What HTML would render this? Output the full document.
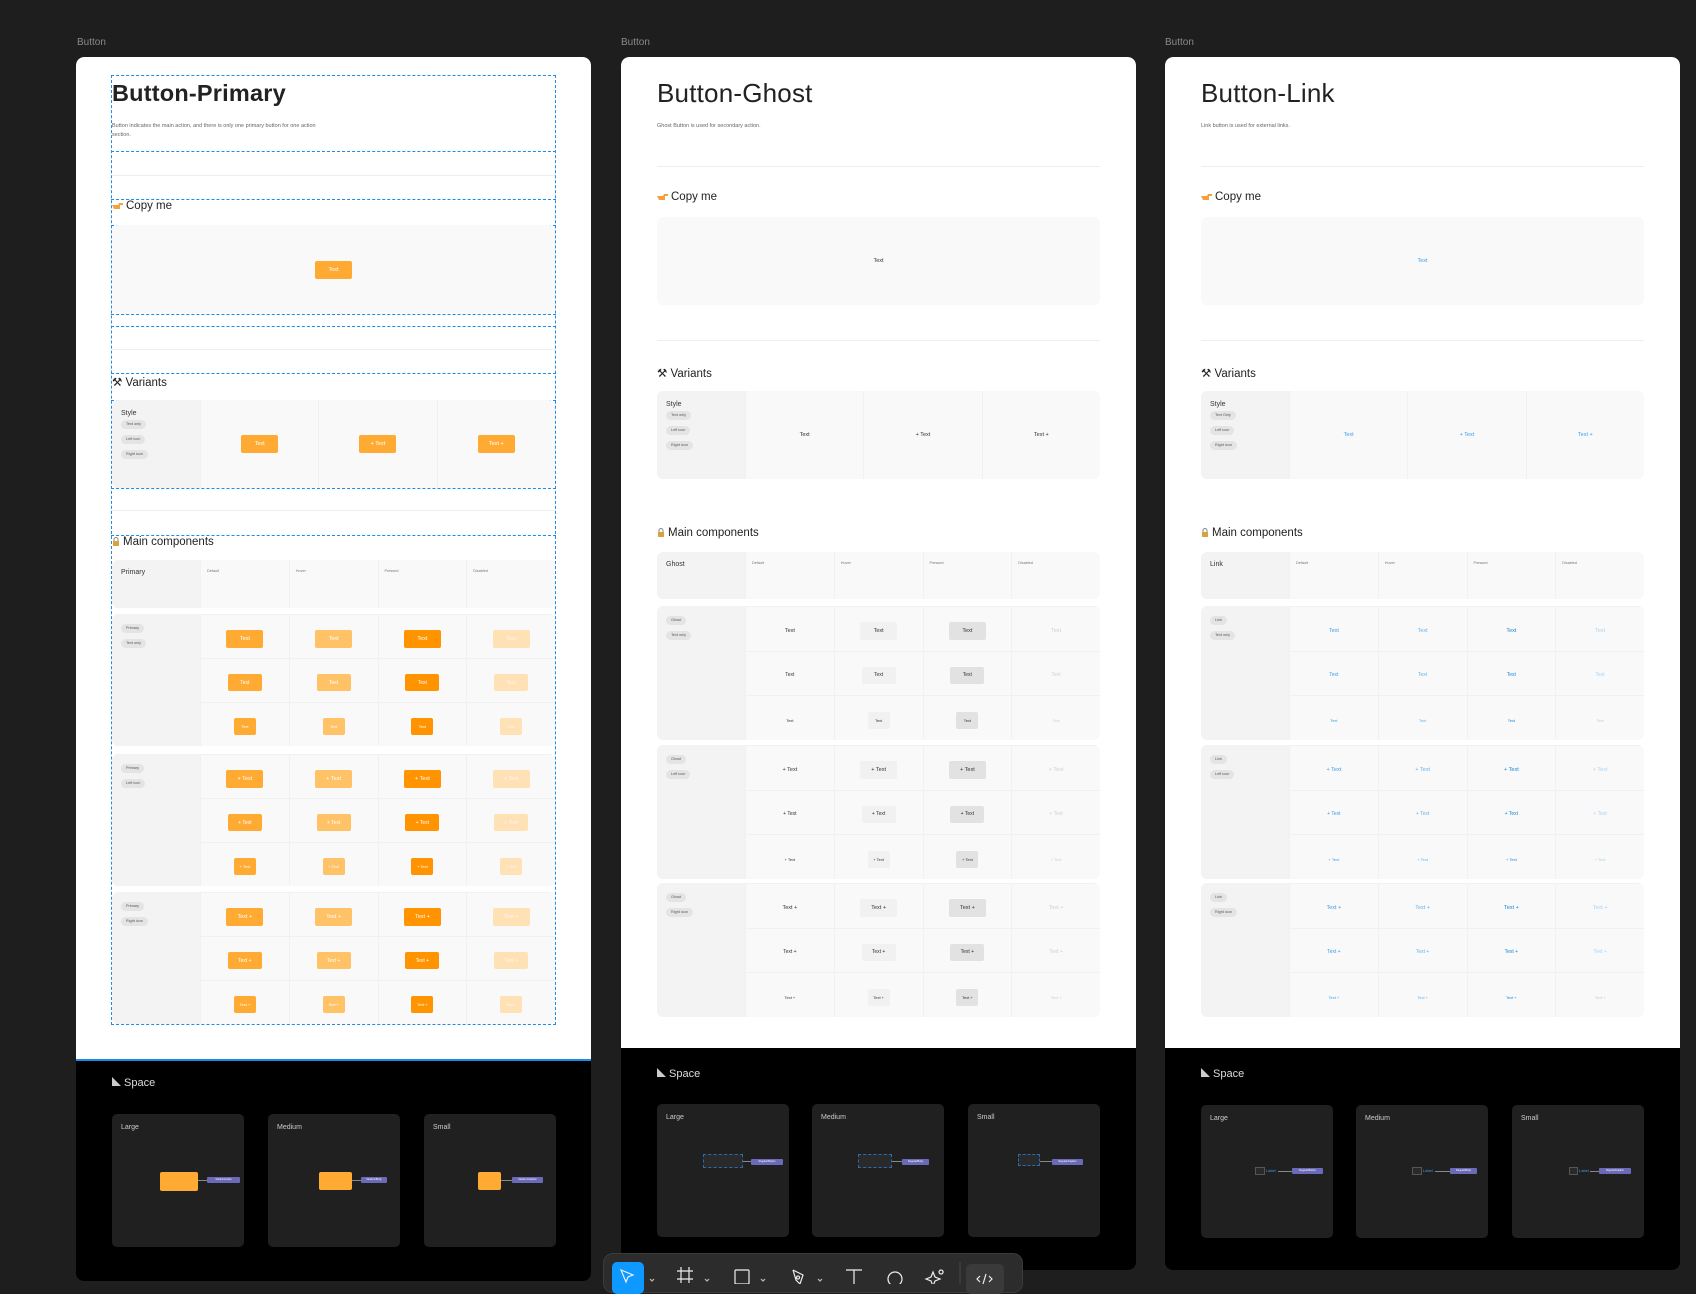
<!DOCTYPE html>
<html><head><meta charset="utf-8"><style>
*{box-sizing:border-box;margin:0;padding:0}
body{width:1696px;height:1281px;background:#1e1e1e;position:relative;overflow:hidden;font-family:"Liberation Sans",sans-serif}
.lab{position:absolute;top:37px;font-size:10px;color:#8a8a8a}
.pan{position:absolute;top:57px;width:515px;height:1213px;background:#000;border-radius:8px;overflow:hidden}
.wh{position:absolute;left:0;top:0;width:100%;background:#fff;border-radius:8px 8px 0 0}
.a{position:absolute}
.t1{font-size:26px;color:#222;left:36px;top:21px;letter-spacing:.2px}
.ds{font-size:5.5px;color:#666;left:36px;line-height:9px;width:230px}
.dv{height:1px;background:#eee;left:36px;width:443px}
.h2{font-size:11.5px;color:#222;left:36px}
.h2 svg{vertical-align:-1px;margin-right:3px}
.box{left:36px;width:443px;background:#f9f9f9;border-radius:6px}
.vb{display:grid;grid-template-columns:88px 1fr 1fr 1fr;overflow:hidden}
.vb>div{display:flex;align-items:center;justify-content:center;border-left:1px solid #f1f1f1}
.vb>div.lc{background:#f3f3f3;display:block;padding:10px 9px;border:0}
.st{font-size:7px;color:#333;margin-bottom:3px}
.tag{display:block;width:max-content;height:9px;line-height:9px;font-size:3.8px;color:#555;background:#e4e4e4;border-radius:5px;padding:0 5px;margin:0 0 6px;font-style:normal}
.g{display:grid;grid-template-columns:88px 1fr 1fr 1fr 1fr;grid-template-rows:1fr 1fr 1fr;overflow:hidden}
.g>.lc{grid-row:1/4;background:#f3f3f3;padding:10px 9px}
.g>.c{display:flex;align-items:center;justify-content:center;border-left:1px solid #f1f1f1;border-top:1px solid #f1f1f1;padding-top:4px}
.hd{display:grid;grid-template-columns:88px 1fr 1fr 1fr 1fr;overflow:hidden}
.hd>div{font-size:3.8px;color:#777;padding:9px 6px;border-left:1px solid #f1f1f1}
.hd>div.lc{background:#f3f3f3;font-size:7px;color:#333;padding:9px 9px;border:0}
.b{display:inline-flex;align-items:center;justify-content:center;border-radius:2px;font-style:normal;white-space:nowrap}
.L{width:37px;height:18px;font-size:5.5px}.M{width:34px;height:17px;font-size:5px}.S{width:22px;height:17px;font-size:4px}
.p{color:#fff;background:#ffab33}.p.h{background:#ffc266}.p.r{background:#ff9400}.p.x{background:#ffe1b6;color:#fff6ea}
.q{color:#333}.q.h{background:#f1f1f1}.q.r{background:#e2e2e2}.q.x{color:#cfcfcf}
.k{color:#3a9fea}.k.h{color:#63b4ef}.k.r{color:#1a86d8}.k.x{color:#a9d4f4}
.sp{font-size:11px;color:#ddd;left:36px}
.cd{position:absolute;width:132px;height:133px;background:#202020;border-radius:5px}
.cd span{position:absolute;left:9px;top:10px;font-size:7px;color:#ccc}
.or{position:absolute;background:#ffab33;border-radius:2px}
.gr{position:absolute;border:1px dashed #2b6cb0;background:#2a2a2a}
.pu{position:absolute;height:6px;background:#6a6ab8;border-radius:1px;font-size:2.5px;color:#fff;line-height:6px;text-align:center}
.ln{position:absolute;height:1px;background:#888}
.dl{position:absolute;border-top:1px dashed #1f8ceb;left:35px;width:445px}
.tb{position:absolute;left:603px;top:1253px;width:420px;height:40px;background:#2c2c2c;border:1px solid #3b3b3b;border-radius:10px}
</style></head><body>

<div class="lab" style="left:77px">Button</div>
<div class="lab" style="left:621px">Button</div>
<div class="lab" style="left:1165px">Button</div>

<!-- PANEL 1 -->
<div class="pan" style="left:76px;height:1224px">
 <div class="wh" style="height:1002px">
  <div class="a t1" style="font-weight:bold;left:36px;font-size:23.5px;top:23px">Button-Primary</div>
  <div class="a ds" style="top:65px;width:215px">Button indicates the main action, and there is only one primary button for one action section.</div>
  <div class="dl" style="top:18px"></div><div class="dl" style="top:94px"></div><div class="dl" style="top:142px"></div><div class="dl" style="top:168px"></div><div class="dl" style="top:257px"></div><div class="dl" style="top:269px"></div><div class="dl" style="top:316px"></div><div class="dl" style="top:343px"></div><div class="dl" style="top:431px"></div><div class="dl" style="top:478px"></div><div class="dl" style="top:967px"></div>
  <div class="a" style="left:35px;top:18px;height:950px;border-left:1px dashed #1f8ceb"></div>
  <div class="a" style="left:479px;top:18px;height:950px;border-left:1px dashed #1f8ceb"></div>
  <div class="a dv" style="top:118px"></div><div class="a dv" style="top:292px"></div><div class="a dv" style="top:453px"></div>
  <div class="a h2" style="top:143px"><svg width="11" height="8"><path d="M0 3h6l1-2h4v2h-3v4H2z" fill="#f6a23a"/></svg>Copy me</div>
  <div class="a box" style="top:168px;height:89px;display:flex;align-items:center;justify-content:center"><i class="b L p">Text</i></div>
  <div class="a h2" style="top:318px">⚒ Variants</div>
  <div class="a box vb" style="top:343px;height:88px"><div class="lc"><div class="st">Style</div><i class="tag">Text only</i><i class="tag">Left icon</i><i class="tag">Right icon</i></div><div><i class="b L p">Text</i></div><div><i class="b L p">+ Text</i></div><div><i class="b L p">Text +</i></div></div>
  <div class="a h2" style="top:479px"><svg width="8" height="9"><rect x="1" y="4" width="6" height="5" fill="#d9a23a"/><path d="M2 4V2.5a2 2 0 0 1 4 0V4" stroke="#888" fill="none"/></svg>Main components</div>
  <div class="a box hd" style="top:503px;height:48px"><div class="lc">Primary</div><div>Default</div><div>Hover</div><div>Pressed</div><div>Disabled</div></div>
  <div class="a box g" style="top:557px;height:132px"><div class="lc"><i class="tag">Primary</i><i class="tag">Text only</i></div>
   <div class="c"><i class="b L p">Text</i></div><div class="c"><i class="b L p h">Text</i></div><div class="c"><i class="b L p r">Text</i></div><div class="c"><i class="b L p x">Text</i></div>
   <div class="c"><i class="b M p">Text</i></div><div class="c"><i class="b M p h">Text</i></div><div class="c"><i class="b M p r">Text</i></div><div class="c"><i class="b M p x">Text</i></div>
   <div class="c"><i class="b S p">Text</i></div><div class="c"><i class="b S p h">Text</i></div><div class="c"><i class="b S p r">Text</i></div><div class="c"><i class="b S p x">Text</i></div></div>
  <div class="a box g" style="top:697px;height:132px"><div class="lc"><i class="tag">Primary</i><i class="tag">Left icon</i></div>
   <div class="c"><i class="b L p">+ Text</i></div><div class="c"><i class="b L p h">+ Text</i></div><div class="c"><i class="b L p r">+ Text</i></div><div class="c"><i class="b L p x">+ Text</i></div>
   <div class="c"><i class="b M p">+ Text</i></div><div class="c"><i class="b M p h">+ Text</i></div><div class="c"><i class="b M p r">+ Text</i></div><div class="c"><i class="b M p x">+ Text</i></div>
   <div class="c"><i class="b S p">+ Text</i></div><div class="c"><i class="b S p h">+ Text</i></div><div class="c"><i class="b S p r">+ Text</i></div><div class="c"><i class="b S p x">+ Text</i></div></div>
  <div class="a box g" style="top:835px;height:132px"><div class="lc"><i class="tag">Primary</i><i class="tag">Right icon</i></div>
   <div class="c"><i class="b L p">Text +</i></div><div class="c"><i class="b L p h">Text +</i></div><div class="c"><i class="b L p r">Text +</i></div><div class="c"><i class="b L p x">Text +</i></div>
   <div class="c"><i class="b M p">Text +</i></div><div class="c"><i class="b M p h">Text +</i></div><div class="c"><i class="b M p r">Text +</i></div><div class="c"><i class="b M p x">Text +</i></div>
   <div class="c"><i class="b S p">Text +</i></div><div class="c"><i class="b S p h">Text +</i></div><div class="c"><i class="b S p r">Text +</i></div><div class="c"><i class="b S p x">Text +</i></div></div>
 </div>
 <div class="a" style="left:-2px;top:-2px;width:519px;height:1006px;border:2px solid #1a8cea"></div>
 <div class="a sp" style="top:1020px"><svg width="9" height="9"><path d="M0 0v9h9z" fill="#ccc"/></svg> Space</div>
 <div class="cd" style="left:36px;top:1057px"><span>Large</span><div class="or" style="left:48px;top:58px;width:38px;height:19px"></div><div class="ln" style="left:86px;top:66px;width:9px"></div><div class="pu" style="left:95px;top:63px;width:33px">Medium/Label</div></div>
 <div class="cd" style="left:192px;top:1057px"><span>Medium</span><div class="or" style="left:51px;top:58px;width:33px;height:18px"></div><div class="ln" style="left:84px;top:66px;width:9px"></div><div class="pu" style="left:93px;top:63px;width:26px">Medium/Body</div></div>
 <div class="cd" style="left:348px;top:1057px"><span>Small</span><div class="or" style="left:54px;top:58px;width:23px;height:18px"></div><div class="ln" style="left:77px;top:66px;width:11px"></div><div class="pu" style="left:88px;top:63px;width:31px">Medium/Caption</div></div>
</div>

<!-- PANEL 2 -->
<div class="pan" style="left:621px">
 <div class="wh" style="height:991px">
  <div class="a t1">Button-Ghost</div>
  <div class="a ds" style="top:65px">Ghost Button is used for secondary action.</div>
  <div class="a dv" style="top:109px"></div><div class="a dv" style="top:283px"></div>
  <div class="a h2" style="top:134px"><svg width="11" height="8"><path d="M0 3h6l1-2h4v2h-3v4H2z" fill="#f6a23a"/></svg>Copy me</div>
  <div class="a box" style="top:160px;height:88px;display:flex;align-items:center;justify-content:center"><i class="b L q">Text</i></div>
  <div class="a h2" style="top:309px">⚒ Variants</div>
  <div class="a box vb" style="top:334px;height:88px"><div class="lc"><div class="st">Style</div><i class="tag">Text only</i><i class="tag">Left icon</i><i class="tag">Right icon</i></div><div><i class="b L q">Text</i></div><div><i class="b L q">+ Text</i></div><div><i class="b L q">Text +</i></div></div>
  <div class="a h2" style="top:470px"><svg width="8" height="9"><rect x="1" y="4" width="6" height="5" fill="#d9a23a"/><path d="M2 4V2.5a2 2 0 0 1 4 0V4" stroke="#888" fill="none"/></svg>Main components</div>
  <div class="a box hd" style="top:495px;height:47px"><div class="lc">Ghost</div><div>Default</div><div>Hover</div><div>Pressed</div><div>Disabled</div></div>
  <div class="a box g" style="top:549px;height:134px"><div class="lc"><i class="tag">Ghost</i><i class="tag">Text only</i></div>
   <div class="c"><i class="b L q">Text</i></div><div class="c"><i class="b L q h">Text</i></div><div class="c"><i class="b L q r">Text</i></div><div class="c"><i class="b L q x">Text</i></div>
   <div class="c"><i class="b M q">Text</i></div><div class="c"><i class="b M q h">Text</i></div><div class="c"><i class="b M q r">Text</i></div><div class="c"><i class="b M q x">Text</i></div>
   <div class="c"><i class="b S q">Text</i></div><div class="c"><i class="b S q h">Text</i></div><div class="c"><i class="b S q r">Text</i></div><div class="c"><i class="b S q x">Text</i></div></div>
  <div class="a box g" style="top:688px;height:134px"><div class="lc"><i class="tag">Ghost</i><i class="tag">Left icon</i></div>
   <div class="c"><i class="b L q">+ Text</i></div><div class="c"><i class="b L q h">+ Text</i></div><div class="c"><i class="b L q r">+ Text</i></div><div class="c"><i class="b L q x">+ Text</i></div>
   <div class="c"><i class="b M q">+ Text</i></div><div class="c"><i class="b M q h">+ Text</i></div><div class="c"><i class="b M q r">+ Text</i></div><div class="c"><i class="b M q x">+ Text</i></div>
   <div class="c"><i class="b S q">+ Text</i></div><div class="c"><i class="b S q h">+ Text</i></div><div class="c"><i class="b S q r">+ Text</i></div><div class="c"><i class="b S q x">+ Text</i></div></div>
  <div class="a box g" style="top:826px;height:134px"><div class="lc"><i class="tag">Ghost</i><i class="tag">Right icon</i></div>
   <div class="c"><i class="b L q">Text +</i></div><div class="c"><i class="b L q h">Text +</i></div><div class="c"><i class="b L q r">Text +</i></div><div class="c"><i class="b L q x">Text +</i></div>
   <div class="c"><i class="b M q">Text +</i></div><div class="c"><i class="b M q h">Text +</i></div><div class="c"><i class="b M q r">Text +</i></div><div class="c"><i class="b M q x">Text +</i></div>
   <div class="c"><i class="b S q">Text +</i></div><div class="c"><i class="b S q h">Text +</i></div><div class="c"><i class="b S q r">Text +</i></div><div class="c"><i class="b S q x">Text +</i></div></div>
 </div>
 <div class="a sp" style="top:1011px"><svg width="9" height="9"><path d="M0 0v9h9z" fill="#ccc"/></svg> Space</div>
 <div class="cd" style="left:36px;top:1047px"><span>Large</span><div class="gr" style="left:46px;top:50px;width:40px;height:14px"></div><div class="ln" style="left:86px;top:57px;width:8px"></div><div class="pu" style="left:94px;top:55px;width:32px">Regular/Button</div></div>
 <div class="cd" style="left:191px;top:1047px"><span>Medium</span><div class="gr" style="left:46px;top:50px;width:34px;height:14px"></div><div class="ln" style="left:80px;top:57px;width:10px"></div><div class="pu" style="left:90px;top:55px;width:27px">Regular/Body</div></div>
 <div class="cd" style="left:347px;top:1047px"><span>Small</span><div class="gr" style="left:50px;top:50px;width:22px;height:12px"></div><div class="ln" style="left:72px;top:57px;width:12px"></div><div class="pu" style="left:84px;top:55px;width:31px">Regular/Caption</div></div>
</div>

<!-- PANEL 3 -->
<div class="pan" style="left:1165px">
 <div class="wh" style="height:991px">
  <div class="a t1">Button-Link</div>
  <div class="a ds" style="top:65px">Link button is used for external links.</div>
  <div class="a dv" style="top:109px"></div><div class="a dv" style="top:283px"></div>
  <div class="a h2" style="top:134px"><svg width="11" height="8"><path d="M0 3h6l1-2h4v2h-3v4H2z" fill="#f6a23a"/></svg>Copy me</div>
  <div class="a box" style="top:160px;height:88px;display:flex;align-items:center;justify-content:center"><i class="b L k">Text</i></div>
  <div class="a h2" style="top:309px">⚒ Variants</div>
  <div class="a box vb" style="top:334px;height:88px"><div class="lc"><div class="st">Style</div><i class="tag">Text Only</i><i class="tag">Left icon</i><i class="tag">Right icon</i></div><div><i class="b L k">Text</i></div><div><i class="b L k">+ Text</i></div><div><i class="b L k">Text +</i></div></div>
  <div class="a h2" style="top:470px"><svg width="8" height="9"><rect x="1" y="4" width="6" height="5" fill="#d9a23a"/><path d="M2 4V2.5a2 2 0 0 1 4 0V4" stroke="#888" fill="none"/></svg>Main components</div>
  <div class="a box hd" style="top:495px;height:47px"><div class="lc">Link</div><div>Default</div><div>Hover</div><div>Pressed</div><div>Disabled</div></div>
  <div class="a box g" style="top:549px;height:134px"><div class="lc"><i class="tag">Link</i><i class="tag">Text only</i></div>
   <div class="c"><i class="b L k">Text</i></div><div class="c"><i class="b L k h">Text</i></div><div class="c"><i class="b L k r">Text</i></div><div class="c"><i class="b L k x">Text</i></div>
   <div class="c"><i class="b M k">Text</i></div><div class="c"><i class="b M k h">Text</i></div><div class="c"><i class="b M k r">Text</i></div><div class="c"><i class="b M k x">Text</i></div>
   <div class="c"><i class="b S k">Text</i></div><div class="c"><i class="b S k h">Text</i></div><div class="c"><i class="b S k r">Text</i></div><div class="c"><i class="b S k x">Text</i></div></div>
  <div class="a box g" style="top:688px;height:134px"><div class="lc"><i class="tag">Link</i><i class="tag">Left icon</i></div>
   <div class="c"><i class="b L k">+ Text</i></div><div class="c"><i class="b L k h">+ Text</i></div><div class="c"><i class="b L k r">+ Text</i></div><div class="c"><i class="b L k x">+ Text</i></div>
   <div class="c"><i class="b M k">+ Text</i></div><div class="c"><i class="b M k h">+ Text</i></div><div class="c"><i class="b M k r">+ Text</i></div><div class="c"><i class="b M k x">+ Text</i></div>
   <div class="c"><i class="b S k">+ Text</i></div><div class="c"><i class="b S k h">+ Text</i></div><div class="c"><i class="b S k r">+ Text</i></div><div class="c"><i class="b S k x">+ Text</i></div></div>
  <div class="a box g" style="top:826px;height:134px"><div class="lc"><i class="tag">Link</i><i class="tag">Right icon</i></div>
   <div class="c"><i class="b L k">Text +</i></div><div class="c"><i class="b L k h">Text +</i></div><div class="c"><i class="b L k r">Text +</i></div><div class="c"><i class="b L k x">Text +</i></div>
   <div class="c"><i class="b M k">Text +</i></div><div class="c"><i class="b M k h">Text +</i></div><div class="c"><i class="b M k r">Text +</i></div><div class="c"><i class="b M k x">Text +</i></div>
   <div class="c"><i class="b S k">Text +</i></div><div class="c"><i class="b S k h">Text +</i></div><div class="c"><i class="b S k r">Text +</i></div><div class="c"><i class="b S k x">Text +</i></div></div>
 </div>
 <div class="a sp" style="top:1011px"><svg width="9" height="9"><path d="M0 0v9h9z" fill="#ccc"/></svg> Space</div>
 <div class="cd" style="left:36px;top:1048px"><span>Large</span><div class="gr" style="left:54px;top:62px;width:10px;height:8px;border-style:solid;border-color:#555"></div><div class="a" style="left:65px;top:63px;font-size:4px;color:#3a9fea">Label</div><div class="ln" style="left:77px;top:66px;width:14px"></div><div class="pu" style="left:91px;top:63px;width:31px">Regular/Button</div></div>
 <div class="cd" style="left:191px;top:1048px"><span>Medium</span><div class="gr" style="left:56px;top:62px;width:10px;height:8px;border-style:solid;border-color:#555"></div><div class="a" style="left:67px;top:63px;font-size:4px;color:#3a9fea">Label</div><div class="ln" style="left:79px;top:66px;width:15px"></div><div class="pu" style="left:94px;top:63px;width:27px">Regular/Body</div></div>
 <div class="cd" style="left:347px;top:1048px"><span>Small</span><div class="gr" style="left:57px;top:62px;width:9px;height:8px;border-style:solid;border-color:#555"></div><div class="a" style="left:67px;top:63px;font-size:4px;color:#3a9fea">Label</div><div class="ln" style="left:78px;top:66px;width:9px"></div><div class="pu" style="left:87px;top:63px;width:32px">Regular/Caption</div></div>
</div>

<!-- toolbar -->
<div class="tb">
 <div class="a" style="left:8px;top:8px;width:32px;height:32px;background:#0d99ff;border-radius:5px"></div>
 <div class="a" style="left:362px;top:10px;width:38px;height:30px;background:#3a3a3a;border-radius:5px"></div>
 <svg class="a" style="left:0;top:0" width="420" height="30" fill="none" stroke="#eee" stroke-width="1.2">
  <path d="M17 16l12 5-5 2-2 5z"/>
  <path d="M46 25l2 2 2-2M101 25l2 2 2-2M157 25l2 2 2-2M214 25l2 2 2-2" stroke="#bbb"/>
  <path d="M77 13v16M85 13v16M73 17h16M73 25h16"/>
  <rect x="131" y="16" width="14" height="14" rx="1"/>
  <path d="M189 16l10 5-3 9M189 16l3 10 4 4M194 22a1.5 1.5 0 1 0 .1 0"/>
  <path d="M242 16h16M250 16v14"/>
  <circle cx="291" cy="25" r="7"/>
  <path d="M329 18l2 5 5 2-5 2-2 5-2-5-5-2 5-2zM337 16a2 2 0 1 0 .1 0"/>
  <path d="M356 8v22" stroke="#444"/>
  <path d="M376 22l-3 3 3 3M385 22l3 3-3 3M382 20l-3 10"/>
 </svg>
</div>
</body></html>
